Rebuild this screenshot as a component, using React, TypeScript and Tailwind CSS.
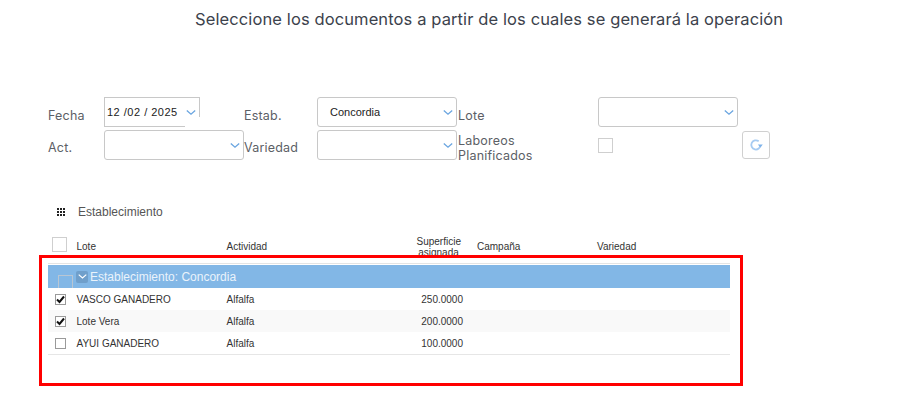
import React from 'react';

const labelFont = "font-['Inter','Noto_Sans',sans-serif]";

const Chevron = ({ className = 'text-[#6aa5e0]' }: { className?: string }) => (
  <svg width="10" height="7" viewBox="0 0 10 7" fill="none" className={className}>
    <path d="M.8 1.4 5 5.2l4.2-3.8" stroke="currentColor" strokeWidth="1.3" />
  </svg>
);

const Label = ({ children, className = '' }: { children: React.ReactNode; className?: string }) => (
  <span className={`${labelFont} text-[12.5px] tracking-[0.2px] text-[#5c6066] ${className}`}>{children}</span>
);

const SelectBox = ({ value }: { value?: string }) => (
  <div className="flex h-[30px] w-[140px] items-center justify-between rounded-[3px] border border-[#c8c8c8] bg-white pr-[3px] pl-[12px]">
    <span className="font-['Liberation_Sans',sans-serif] text-[11px] text-[#222]">{value}</span>
    <Chevron />
  </div>
);

const Check = ({ checked }: { checked?: boolean }) => (
  <div className="flex h-[11px] w-[11px] items-center justify-center border border-[#9a9a9a] bg-white">
    {checked && (
      <svg width="9" height="9" viewBox="0 0 9 9" fill="none">
        <path d="M1 4.5 3.5 7 8 1.5" stroke="#111" strokeWidth="2" />
      </svg>
    )}
  </div>
);

const rows = [
  { lote: 'VASCO GANADERO', actividad: 'Alfalfa', sup: '250.0000', checked: true },
  { lote: 'Lote Vera', actividad: 'Alfalfa', sup: '200.0000', checked: true, alt: true },
  { lote: 'AYUI GANADERO', actividad: 'Alfalfa', sup: '100.0000', checked: false },
];

export default function App() {
  return (
    <div className="relative h-[410px] w-[916px] overflow-hidden bg-white font-['Liberation_Sans',sans-serif]">
      <h1 className={`${labelFont} pt-[9px] pl-[195px] text-[16.5px] leading-[20px] font-normal tracking-[0.11px] whitespace-nowrap text-[#3c424c]`}>
        Seleccione los documentos a partir de los cuales se generará la operación
      </h1>

      <div className="mt-[68px] ml-[48px] grid grid-cols-[56px_140px_73px_140px_141px_140px_32px] grid-rows-[30px_30px] gap-y-[3px]">
        <div className="flex items-center pt-[8px]"><Label>Fecha</Label></div>
        <div className="relative h-[30px] w-[96px] border border-[#c8c8c8] bg-white">
          <div className="flex h-full items-center justify-between pr-[3px] pl-[2px]">
            <span className="pt-[1px] text-[11px] tracking-[0.5px] whitespace-pre text-[#222]">12 /02 / 2025</span>
            <Chevron />
          </div>
          {/* corner of the native date input is cut off in the picture */}
          <div className="absolute right-[-1px] bottom-[-1px] h-[10px] w-[15px] bg-white" />
        </div>
        <div className="flex items-center pt-[8px]"><Label>Estab.</Label></div>
        <SelectBox value="Concordia" />
        <div className="flex items-center pt-[8px] pl-[1px]"><Label>Lote</Label></div>
        <SelectBox />
        <div />

        <div className="flex items-center pt-[7px]"><Label>Act.</Label></div>
        <SelectBox />
        <div className="flex items-center pt-[7px]"><Label>Variedad</Label></div>
        <SelectBox />
        <div className="flex items-center pt-[6px] pl-[1px]"><Label className="leading-[15px] whitespace-pre-line">{'Laboreos\nPlanificados'}</Label></div>
        <div className="pt-[8px]">
          <div className="h-[15px] w-[15px] border border-[#cfcfcf]" />
        </div>
        <div className="pt-[1px] pl-[4px]">
          <div className="flex h-[28px] w-[28px] items-center justify-center rounded-[3px] border border-[#d0d0d0]">
            <svg width="14" height="14" viewBox="0 0 14 14" fill="none">
              <path d="M11.5 7a4.6 4.6 0 1 1-1.8-3.7" stroke="#a6cbf2" strokeWidth="1.8" />
              <path d="M8.8 6.6h5L11.4 9.4z" fill="#7fb3ea" />
            </svg>
          </div>
        </div>
      </div>

      <div className="mt-[44px] ml-[57px] flex h-[16px] items-center gap-[13px]">
        <div className="grid grid-cols-3 gap-[1px]">
          {Array.from({ length: 9 }).map((_, i) => (
            <div key={i} className="h-[2px] w-[2px] bg-[#222]" />
          ))}
        </div>
        <span className="text-[12px] text-[#555]">Establecimiento</span>
      </div>

      <div className="mt-[16px] ml-[48px] w-[682px]">
        <div className="flex h-[27px] text-[10px] text-[#333]">
          <div className="w-[28.5px] pt-[1px] pl-[4px]">
            <div className="h-[15px] w-[15px] border border-[#cfcfcf]" />
          </div>
          <div className="w-[150px] pt-[4px] leading-[14px]">Lote</div>
          <div className="w-[190px] pt-[4px] leading-[14px]">Actividad</div>
          <div className="w-[44px] text-center leading-[11px] whitespace-nowrap">Superficie<br />asignada</div>
          <div className="w-[136.5px] pt-[4px] pl-[16.5px] leading-[14px]">Campaña</div>
          <div className="pt-[4px] leading-[14px]">Variedad</div>
        </div>

        <div className="border-t border-[#e4e4e4] pt-[1px]">
          <div className="relative flex h-[23px] items-center bg-[#82b7e6]">
            <div className="absolute top-[10px] left-[10px] h-[13px] w-[15px] border border-b-0 border-[#b9c6d3]" />
            <div className="ml-[28px] flex h-[12px] w-[12px] items-center justify-center rounded-[2px] bg-[#6f9fcb]">
              <Chevron className="w-[9px] text-white" />
            </div>
            <span className="ml-[2px] text-[12px] text-[#eaf3fb]">Establecimiento: Concordia</span>
          </div>
        </div>

        <div className="border-b border-[#e6e6e6]">
          {rows.map((row) => (
            <div key={row.lote} className={`flex h-[22px] items-center text-[10px] text-[#333] ${row.alt ? 'bg-[#f9f9f9]' : 'bg-white'}`}>
              <div className="w-[28.5px] pl-[7px]"><Check checked={row.checked} /></div>
              <div className="w-[150px]">{row.lote}</div>
              <div className="w-[150px]">{row.actividad}</div>
              <div className="w-[86.5px] text-right">{row.sup}</div>
            </div>
          ))}
        </div>
      </div>

      {/* red annotation drawn over the table */}
      <div className="pointer-events-none absolute top-[255px] left-[39px] h-[131px] w-[704px] border-[3px] border-[#ff0000]" />
    </div>
  );
}
